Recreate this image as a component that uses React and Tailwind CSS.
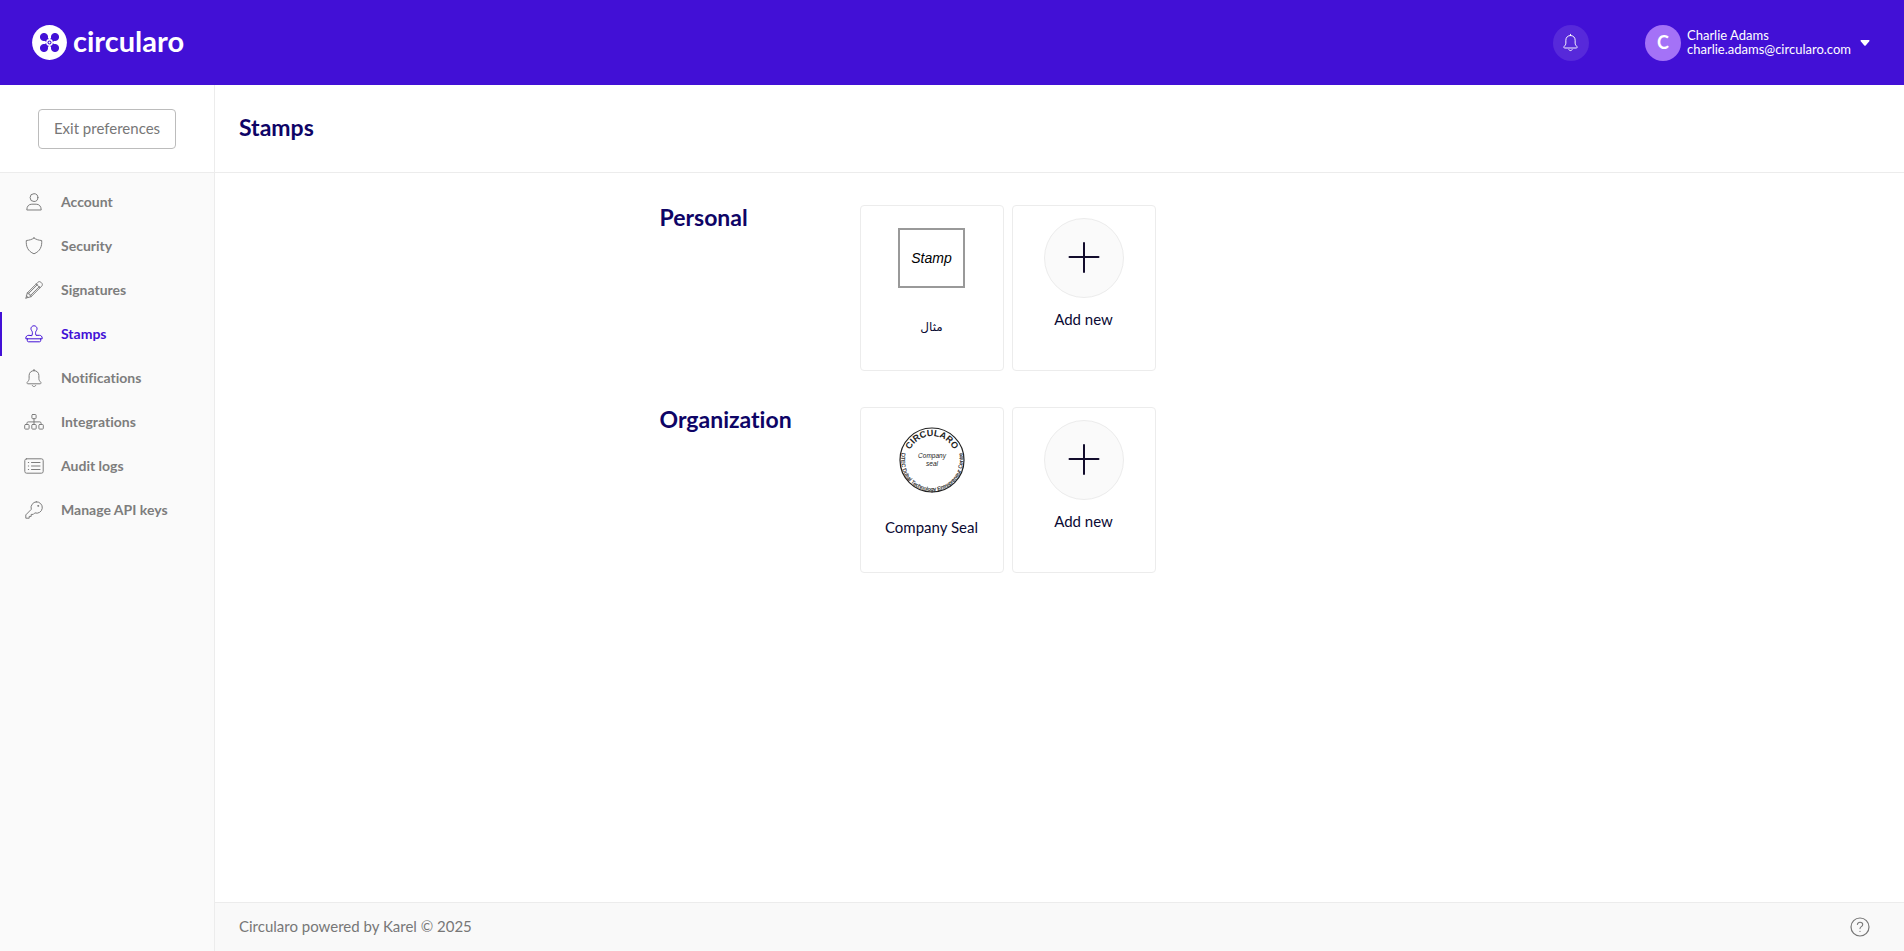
import React from 'react';

function Icon({ children, className = 'size-5', viewBox = '0 0 20 20' }) {
  return (
    <svg
      aria-hidden="true"
      className={className}
      viewBox={viewBox}
      fill="none"
      stroke="currentColor"
      strokeWidth="1"
      strokeLinecap="round"
      strokeLinejoin="round"
    >
      {children}
    </svg>
  );
}

const bell = (
  <>
    <path d="M10 1.400v1.200M10 2.600c-3 0-4.900 2.200-4.900 5v3.100c0 1.600-.9 2.400-1.900 3.600-.5.700-.1 1.500.7 1.500h12.200c.8 0 1.200-.8.700-1.500-1-1.200-1.900-2-1.900-3.600V7.600c0-2.800-1.900-5-4.900-5z" />
    <path d="M8.300 17.500c.3.700.9 1 1.700 1s1.400-.3 1.700-1" />
  </>
);

const navItems = [
  {
    label: 'Account',
    icon: (
      <>
        <circle cx="10" cy="5.600" r="3.900" />
        <path d="M2.800 17.600c0-3.400 2-5.400 5-5.400h4.400c3 0 5 2 5 5.400z" />
      </>
    ),
  },
  {
    label: 'Security',
    icon: <path d="M10 2C8 3.500 5.200 4.300 2.300 4.500c-.4 6 1.500 10.800 7.700 13.300 6.200-2.500 8.100-7.300 7.700-13.300C14.800 4.300 12 3.500 10 2z" />,
  },
  {
    label: 'Signatures',
    icon: (
      <path d="M2 18l1.300-5.100L13.900 2.300c.9-.9 2.100-.9 2.900-.1l1 1c.8.800.8 2-.1 2.900L7.100 16.700 2 18zM3.300 12.900l1.600.3.300 1.600 1.600.3.300 1.600M12.200 4l3.800 3.800M4.900 13.200l8.600-8.600M6.800 15.100l8.600-8.600M2.700 16l1.300 1.400" />
    ),
  },
  {
    label: 'Stamps',
    active: true,
    icon: (
      <path d="M8 11.300c.8-2.400.5-3.500-.5-4.900-1.300-1.900-.1-4.600 2.500-4.600s3.800 2.700 2.500 4.600c-1 1.400-1.300 2.500-.5 4.900h3.500c1.600 0 2.700 1.200 2.700 2.900v.6H1.800v-.6c0-1.700 1.100-2.900 2.700-2.900zM3.300 14.800v1.800c0 .7.500 1.200 1.200 1.200h11c.7 0 1.200-.5 1.200-1.200v-1.800" />
    ),
  },
  { label: 'Notifications', icon: bell },
  {
    label: 'Integrations',
    icon: (
      <>
        <rect x="7.900" y="2.500" width="4.200" height="4.200" rx=".8" />
        <rect x=".7" y="12.500" width="4.400" height="4.600" rx=".8" />
        <rect x="7.800" y="12.500" width="4.400" height="4.600" rx=".8" />
        <rect x="14.900" y="12.500" width="4.400" height="4.600" rx=".8" />
        <path d="M10 6.700v5.800M2.900 12.500v-1.300c0-.8.5-1.300 1.300-1.300h11.600c.8 0 1.300.5 1.300 1.300v1.300" />
      </>
    ),
  },
  {
    label: 'Audit logs',
    icon: (
      <>
        <rect x=".8" y="2.800" width="18.400" height="14.400" rx="1.800" />
        <path d="M7.500 6.500h8.500M7.500 10h8.500M7.500 13.500h8.500M4.300 6.500h.4M4.300 10h.4M4.300 13.500h.4" />
      </>
    ),
  },
  {
    label: 'Manage API keys',
    icon: (
      <>
        <path d="M12.300 1.800a5.700 5.700 0 1 1-1.500 11.100L9.300 14.400H7.200v2H5.200v1.800H1.800v-3.300l5.500-5.600A5.700 5.700 0 0 1 12.300 1.800z" />
        <circle cx="14.100" cy="5.900" r=".5" />
      </>
    ),
  },
];

function Logo() {
  return (
    <a href="#home" aria-label="circularo" className="flex items-center gap-[6px] text-white">
      <svg aria-hidden="true" className="size-[35px]" viewBox="0 0 35 35">
        <circle cx="17.500" cy="17.500" r="17.400" fill="#fff" />
        <g fill="#4210d6" stroke="#4210d6">
          <path d="M12 12l11 11M23 12L12 23" strokeWidth="4" />
          <circle cx="12" cy="12" r="3.600" />
          <circle cx="23" cy="12" r="3.600" />
          <circle cx="12" cy="23" r="3.600" />
          <circle cx="23" cy="23" r="3.600" />
        </g>
        <circle cx="17.500" cy="17.500" r="3.400" fill="#fff" />
        <circle cx="17.500" cy="17.500" r="2" fill="#4210d6" />
        <circle cx="17.500" cy="17.500" r="1" fill="#fff" />
      </svg>
      <span className="pb-1 text-[29px] leading-7 font-bold">circularo</span>
    </a>
  );
}

function Seal() {
  return (
    <svg role="img" aria-label="Company seal" className="size-[66px]" viewBox="-33 -33 66 66">
      <defs>
        <path id="seal-top" d="M-24 0A24 24 0 0 1 24 0" />
        <path id="seal-bottom" d="M-29.300 -10A31 31 0 1 0 29.300 -10" />
      </defs>
      <circle r="32" fill="none" stroke="#222" strokeWidth="1.200" />
      <g fill="#222" className="font-['Liberation_Sans']" textAnchor="middle">
        <text fontSize="9" fontWeight="bold">
          <textPath href="#seal-top" startOffset="50%">CIRCULARO</textPath>
        </text>
        <text fontSize="5.500" stroke="#222" strokeWidth=".15">
          <textPath href="#seal-bottom" startOffset="50%">DTEC Dubai Technology Entrepreneur Centre</textPath>
        </text>
        <text fontSize="6.500" fontStyle="italic" y="-2">Company</text>
        <text fontSize="6.500" fontStyle="italic" y="5.500">seal</text>
      </g>
    </svg>
  );
}

const cardClass =
  'flex h-[166px] w-36 flex-col items-center rounded-[4px] border border-[#ececec] bg-white pt-3 text-[15px] leading-5 text-[#0a0a33]';

function StampCard({ label, children }) {
  return (
    <button type="button" className={cardClass}>
      <span className="flex h-20 items-center justify-center">{children}</span>
      <span className="mt-[17px]">{label}</span>
    </button>
  );
}

function AddCard() {
  return (
    <button type="button" className={cardClass}>
      <span className="flex size-20 items-center justify-center rounded-full border border-[#ececec] bg-[#fafafa]">
        <svg aria-hidden="true" className="size-8" viewBox="0 0 32 32" stroke="#120c2c" strokeWidth="2" strokeLinecap="round">
          <path d="M16 1v29M1.500 15h29" />
        </svg>
      </span>
      <span className="mt-[11px]">Add new</span>
    </button>
  );
}

function Section({ title, children }) {
  return (
    <section className="flex">
      <h2 className="w-[200px] shrink-0 text-[23px] leading-6 font-bold text-[#0e0466]">{title}</h2>
      <div className="flex flex-wrap gap-2">{children}</div>
    </section>
  );
}

export default function App() {
  return (
    <div className="flex min-h-screen flex-col bg-white font-['Lato','DejaVu_Sans',sans-serif] text-[#777] [font-variant-ligatures:none]">
      <header className="flex h-[85px] items-center justify-between bg-[#4210d6] pr-[34px] pl-8 text-white">
        <Logo />
        <div className="flex items-center gap-14">
          <button type="button" aria-label="Notifications" className="flex size-9 items-center justify-center rounded-full bg-[#5729da]">
            <Icon className="size-[19px]">{bell}</Icon>
          </button>
          <button type="button" className="flex items-center text-left">
            <span className="flex size-9 items-center justify-center rounded-full bg-[#a472f7] text-[18px] font-bold">C</span>
            <span className="ml-[6px] pb-[2px] text-[13px] leading-[14px]">
              <span className="block">Charlie Adams</span>
              <span className="block">charlie.adams@circularo.com</span>
            </span>
            <svg aria-hidden="true" className="ml-[9px] h-[6px] w-[10px]" viewBox="0 0 10 6" fill="#fff">
              <path d="M1.200 0h7.600c.7 0 1 .8.500 1.300L5.700 5.400a1 1 0 0 1-1.400 0L.7 1.300C.2.800.5 0 1.200 0z" />
            </svg>
          </button>
        </div>
      </header>

      <div className="flex grow">
        <aside className="flex w-[215px] shrink-0 flex-col border-r border-[#ececec] bg-[#fafafa]">
          <div className="flex h-[88px] items-center justify-center border-b border-[#ececec] bg-white">
            <button type="button" className="h-10 rounded-[4px] border border-[#bcbcbc] px-[15px] pb-[2px] text-[15px] leading-5">
              Exit preferences
            </button>
          </div>
          <nav className="flex flex-col pt-[7px]">
            {navItems.map((item) => (
              <a
                key={item.label}
                href={'#' + item.label.toLowerCase().replaceAll(' ', '-')}
                aria-current={item.active ? 'page' : undefined}
                className={
                  item.active
                    ? 'flex h-11 items-center gap-[17px] border-l-2 border-[#4210d6] pl-[22px] text-[14px] font-bold text-[#4210d6]'
                    : 'flex h-11 items-center gap-[17px] border-l-2 border-transparent pl-[22px] text-[14px] font-bold text-[#7d7d7d]'
                }
              >
                <Icon>{item.icon}</Icon>
                <span className="pb-[2px]">{item.label}</span>
              </a>
            ))}
          </nav>
        </aside>

        <div className="flex min-w-0 grow flex-col">
          <div className="flex h-[88px] items-center border-b border-[#ececec] px-6 pb-1">
            <h1 className="text-[23px] leading-6 font-bold text-[#0e0466]">Stamps</h1>
          </div>
          <main className="mx-auto flex w-full max-w-[800px] grow flex-col gap-9 pt-8">
            <Section title="Personal">
              <StampCard label={<span className="text-[12px] font-['DejaVu_Sans',sans-serif]">مثال</span>}>
                <span className="flex h-[60px] w-[67px] items-center justify-center border-2 border-[#999] font-['Liberation_Sans',sans-serif] text-[14px] text-black italic">
                  Stamp
                </span>
              </StampCard>
              <AddCard />
            </Section>
            <Section title="Organization">
              <StampCard label="Company Seal">
                <Seal />
              </StampCard>
              <AddCard />
            </Section>
          </main>
          <footer className="flex h-[49px] items-center justify-between border-t border-[#ececec] bg-[#f9f9f9] pr-[34px] pl-6 text-[15px]">
            <span className="pb-[2px]">Circularo powered by Karel © 2025</span>
            <button type="button" aria-label="Help">
              <Icon>
                <circle cx="10" cy="10" r="9" strokeWidth="1.200" />
                <path d="M7.400 7.400c.2-1.400 1.200-2.200 2.600-2.200 1.600 0 2.700.9 2.700 2.200 0 1-.5 1.600-1.400 2.200-.9.600-1.300 1-1.300 2M10 14.200v.3" strokeWidth="1.100" />
              </Icon>
            </button>
          </footer>
        </div>
      </div>
    </div>
  );
}
